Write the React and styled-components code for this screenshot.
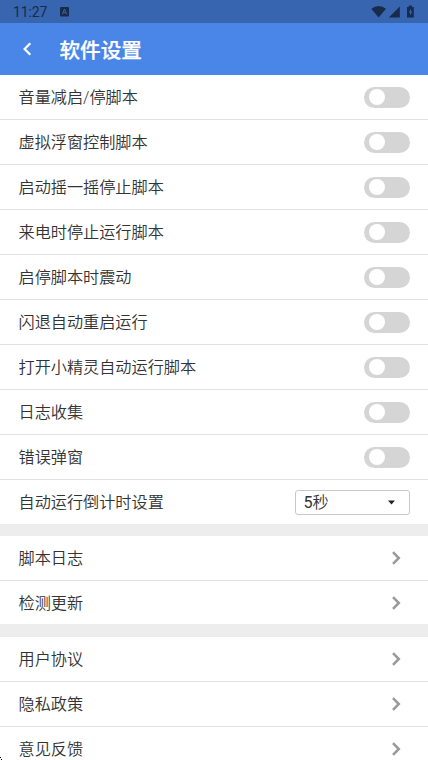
import styled, { createGlobalStyle } from 'styled-components';
import { useState } from 'react';

const GlobalStyle = createGlobalStyle`
  * {
    box-sizing: border-box;
  }
  body {
    margin: 0;
    background: #fff;
    overflow: hidden;
    font-family: Roboto, "Noto Sans CJK SC", sans-serif;
  }
`;

const Screen = styled.div`
  position: relative;
  height: 760px;
  overflow: hidden;
`;

const StatusBar = styled.div`
  display: flex;
  align-items: center;
  height: 23px;
  padding: 0 13px 0 13px;
  background: #3765b0;
  color: #182b4b;
`;

const Clock = styled.span`
  width: 46px;
  font-size: 14px;
  line-height: 23px;
  letter-spacing: -0.1px;
  padding-top: 1px;
`;

const StatusIcons = styled.svg`
  margin-left: auto;
`;

const Header = styled.header`
  display: flex;
  align-items: center;
  height: 52px;
  padding-left: 22px;
  background: #4986e7;
  color: #fff;
`;

const Title = styled.h1`
  margin: 0 0 0 27.5px;
  padding-top: 4px;
  font-size: 20.6px;
  line-height: 48px;
  font-weight: 500;
  -webkit-text-stroke: 0.25px #fff;
`;

const Group = styled.section`
  border-top: ${(props) => props.$gap || 0}px solid #ededed;
`;

const Row = styled.div`
  display: flex;
  align-items: center;
  justify-content: space-between;
  height: 45px;
  padding: 0 18px;
  border-bottom: 1px solid #e1e1e1;
  &:last-child {
    height: ${(props) => props.$last || 44}px;
    border-bottom: none;
  }
`;

const Label = styled.span`
  padding: 2px 0 0 0.5px;
  font-size: 16.15px;
  line-height: 24px;
  font-weight: 350;
  color: #333;
`;

const Switch = styled.button`
  display: flex;
  align-items: center;
  justify-content: ${(props) => (props.$on ? 'flex-end' : 'flex-start')};
  width: 46px;
  height: 21px;
  padding: 0 5px 0 4.5px;
  border: none;
  border-radius: 11px;
  background: ${(props) => (props.$on ? '#4986e7' : '#d5d5d5')};
`;

const Knob = styled.span`
  width: 16px;
  height: 16px;
  border-radius: 50%;
  background: #fff;
`;

const Select = styled.div`
  display: flex;
  align-items: center;
  justify-content: space-between;
  width: 115px;
  height: 25px;
  padding: 1px 14px 0 7.5px;
  border: 1px solid #c9c9c9;
  border-radius: 3px;
  font-size: 16.15px;
  line-height: 22px;
  font-weight: 350;
  color: #333;
`;

const Digit = styled.span`
  font-weight: 400;
`;

const Chevron = styled.svg`
  margin-right: 8.5px;
`;

const Corner = styled.svg`
  position: absolute;
  left: 0;
  bottom: 0;
`;

const switches = [
  '音量减启/停脚本',
  '虚拟浮窗控制脚本',
  '启动摇一摇停止脚本',
  '来电时停止运行脚本',
  '启停脚本时震动',
  '闪退自动重启运行',
  '打开小精灵自动运行脚本',
  '日志收集',
  '错误弹窗',
];

const SwitchRow = ({ label }) => {
  const [on, setOn] = useState(false);

  return (
    <Row>
      <Label>{label}</Label>
      <Switch $on={on} onClick={() => setOn(!on)}>
        <Knob />
      </Switch>
    </Row>
  );
};

const LinkRow = ({ label, last }) => (
  <Row $last={last}>
    <Label>{label}</Label>
    <Chevron width="11" height="14" viewBox="0 0 11 14" fill="none" stroke="#999" strokeWidth="2.5">
      <path d="M2 1.2 L7.8 7 L2 12.8" />
    </Chevron>
  </Row>
);

const App = () => {
  return (
    <Screen>
      <GlobalStyle />
      <StatusBar>
        <Clock>11:27</Clock>
        <svg width="11" height="11" viewBox="0 0 11 11">
          <rect x="1" y="1" width="9" height="9.5" rx="1" fill="#182b4b" />
          <path d="M3.4 8.3 L5.5 3 L7.6 8.3 M4.3 6.7 H6.7" fill="none" stroke="#3765b0" strokeWidth="1" />
        </svg>
        <StatusIcons width="44" height="14" viewBox="0 0 44 14" fill="#182b4b">
          <path d="M0.3 3.8 Q7.6 -1.8 15 3.8 L7.6 12.5 Z" />
          <path d="M28.8 1.5 V12.5 H17.8 Z" />
          <path d="M36 2 H37.8 V0.6 H40.8 V2 H42.8 V12.5 H36 Z" />
          <path d="M40 3.6 L37.9 7.4 H39.2 V10.7 L41.3 6.6 H40 Z" fill="#3765b0" />
        </StatusIcons>
      </StatusBar>
      <Header>
        <svg width="10" height="14" viewBox="0 0 10 14" fill="none" stroke="#fff" strokeWidth="2.2">
          <path d="M8.3 1.3 L2.6 7 L8.3 12.7" />
        </svg>
        <Title>软件设置</Title>
      </Header>
      <Group>
        {switches.map((label) => (
          <SwitchRow key={label} label={label} />
        ))}
        <Row>
          <Label>自动运行倒计时设置</Label>
          <Select>
            <span><Digit>5</Digit>秒</span>
            <svg width="7" height="5" viewBox="0 0 7 5">
              <path d="M0 0.5 H7 L3.5 4.5 Z" fill="#222" />
            </svg>
          </Select>
        </Row>
      </Group>
      <Group $gap={12}>
        <LinkRow label="脚本日志" />
        <LinkRow label="检测更新" last={43} />
      </Group>
      <Group $gap={13}>
        <LinkRow label="用户协议" />
        <LinkRow label="隐私政策" />
        <LinkRow label="意见反馈" />
      </Group>
      <Corner width="2" height="3" viewBox="0 0 2 3">
        <path d="M0 0 H1 V2 H2 V3 H1 V1 H0 Z" fill="#000" />
      </Corner>
    </Screen>
  );
};

export default App;
